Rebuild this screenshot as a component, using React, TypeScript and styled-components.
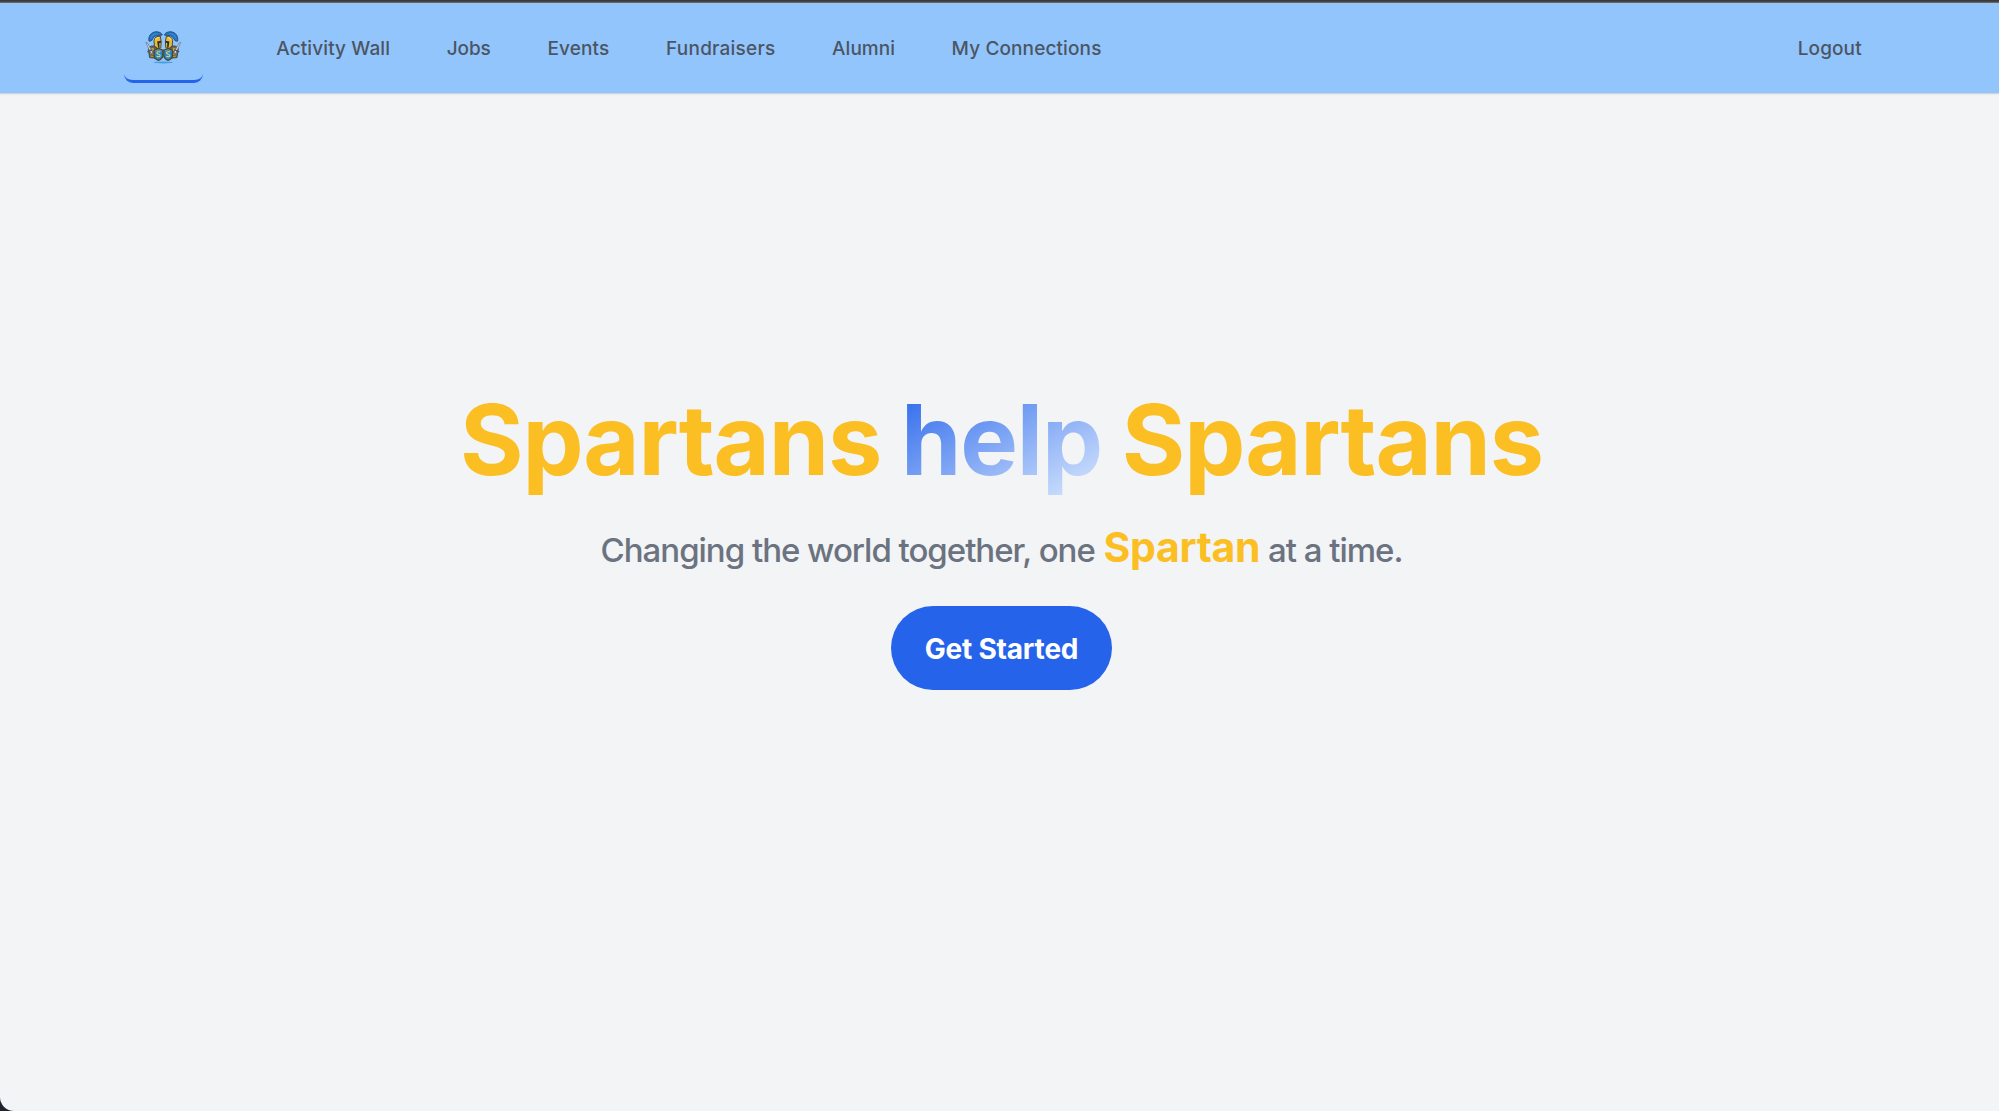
import React from "react";
import styled, { createGlobalStyle } from "styled-components";

const GlobalStyle = createGlobalStyle`
  *, *::before, *::after { box-sizing: border-box; }
  body {
    margin: 0;
    background: #1e2130;
    font-family: Inter, "Liberation Sans", sans-serif;
  }
`;

const Page = styled.div`
  height: 1111px;
  display: flex;
  flex-direction: column;
  overflow: hidden;
  background: #f3f4f6;
  border-bottom-left-radius: 14px;
`;

const WindowEdge = styled.div`
  flex: none;
  height: 3px;
  background: linear-gradient(#3b3b3b 0 1px, #474543 1px 2px, #6a6561 2px 3px);
`;

const Nav = styled.nav`
  flex: none;
  height: 91px;
  display: flex;
  align-items: center;
  padding: 0 118px 0 124px;
  background: #93c5fd;
  border-bottom: 1px solid #d1d5db;
  box-shadow: 0 1px 1px rgba(0, 0, 0, 0.04);
`;

const LogoLink = styled.a`
  width: 79px;
  height: 70px;
  margin-right: 54px;
  padding-top: 3px;
  display: flex;
  align-items: center;
  justify-content: center;
  border-bottom: 3px solid #2563eb;
  border-radius: 9px;
`;

const NavLinks = styled.div`
  flex: 1;
  display: flex;
  gap: 18px;
`;

const NavLink = styled.a<{ $tracking: number }>`
  padding: 2px 19.3px 0;
  color: #4b5563;
  font-size: 19px;
  font-weight: 500;
  line-height: 28px;
  letter-spacing: ${(p) => p.$tracking}px;
  white-space: nowrap;
`;

const Hero = styled.main`
  flex: 1;
  display: flex;
  flex-direction: column;
  align-items: center;
  padding: 287px 0 0 4px;
`;

const Title = styled.h1`
  margin: 0;
  color: #fbbf24;
  font-size: 97px;
  font-weight: 700;
  line-height: 117px;
  letter-spacing: -1.15px;
  word-spacing: -2px;
  white-space: nowrap;
`;

const GradientWord = styled.span`
  color: transparent;
  background: linear-gradient(to bottom right, #2563eb, #dbeafe);
  background-clip: text;
  -webkit-background-clip: text;
`;

const Subtitle = styled.p`
  margin: 27px 0 31px;
  height: 50px;
  color: #6b7280;
  font-size: 33px;
  font-weight: 500;
  line-height: 50px;
  letter-spacing: -1.02px;
  white-space: nowrap;
`;

const Highlight = styled.span`
  margin-left: 1px;
  color: #fbbf24;
  font-size: 41px;
  font-weight: 700;
  line-height: 1;
  letter-spacing: -0.32px;
`;

const StartButton = styled.button`
  width: 221px;
  height: 84px;
  padding: 2px 0 0;
  border: 0;
  border-radius: 42px;
  background: #2563eb;
  color: #fff;
  font-family: inherit;
  font-size: 28px;
  font-weight: 700;
  line-height: 40px;
  letter-spacing: -0.2px;
`;

const Spartan = () => (
  <g>
    <path d="M4 10.2C3 5.2 6.2 1.1 10.8.8c3-.2 5.6 1 6.5 3.2l-3.6.5C9.4 4.3 8.2 6.6 6.6 9.7z" fill="#2476c4" stroke="#245080" strokeWidth="1" />
    <path d="M5.6 7.2C6.7 4.4 8.8 2.8 12 2.7" fill="none" stroke="#3b97e0" strokeWidth=".8" />
    <path d="M9 9.5c.4-3 2.8-4.6 6.3-4.3l.9 5.3-.4 6.2-2.7 1.1L9.4 15z" fill="#e8bd34" stroke="#4b4738" strokeWidth="1" />
    <path d="M12.2 10.4l3.9-.6v1.9l-1.8.4.2 4.7h-1.4z" fill="#252b35" />
    <path d="M10.5 9c.5-1.5 1.5-2.2 3-2.4" fill="none" stroke="#ffe98c" strokeWidth=".9" />
    <path d="M3.4 18.4c0-2.3 2.6-4 6-3.2l3.2 3.2-2.1 8.8-5.9-.6z" fill="#6f6447" stroke="#37434f" strokeWidth=".9" />
    <path d="M5.2 18.1l2.8-1.4 1.7 2.1-2.9 1.9z" fill="#c9a640" />
    <path d="M5 22.2l3.6 1.2M5.4 25l3 .7" stroke="#b9993e" strokeWidth="1" />
    <path d="M.9 11.5l1.4.2 5.4 9.8-1.8 1z" fill="#dbe4ed" stroke="#5d6d80" strokeWidth=".7" />
    <path d="M2.4 20.8l5-2.2" stroke="#4b5260" strokeWidth="1.3" />
    <path d="M9.2 19.2l4.2-1.7 4.4 1.7v5.2c0 2.4-1.8 3.8-4.3 4.9-2.6-1.1-4.3-2.6-4.3-4.9z" fill="#2387d4" stroke="#4c4930" strokeWidth="1.3" />
    <path d="M10.3 20l3.2-1.2 3.2 1.2" fill="none" stroke="#c4a23d" strokeWidth=".6" />
  </g>
);

const Emblem = () => (
  <path d="M3.4.5C2 -.3 0 .1 0 1.4c0 1.6 3.3.8 3.3 2.5 0 1.4-2.1 1.7-3.5.8" fill="none" stroke="#e4d75e" strokeWidth="1.1" />
);

const Logo = () => (
  <svg width="37" height="34" viewBox="0 0 37 34" aria-hidden="true">
    <ellipse cx="18.3" cy="31.4" rx="9.5" ry="1" fill="#479fdd" />
    <Spartan />
    <g transform="translate(36.6 0) scale(-1 1)">
      <Spartan />
    </g>
    <g transform="translate(11.9 20.6)">
      <Emblem />
    </g>
    <g transform="translate(21.5 20.6)">
      <Emblem />
    </g>
  </svg>
);

const links = [
  { label: "Activity Wall", tracking: 0.1 },
  { label: "Jobs", tracking: -0.08 },
  { label: "Events", tracking: 0.16 },
  { label: "Fundraisers", tracking: 0.22 },
  { label: "Alumni", tracking: 0.02 },
  { label: "My Connections", tracking: 0.12 },
];

export default function App() {
  return (
    <>
      <GlobalStyle />
      <Page>
        <WindowEdge />
        <Nav>
          <LogoLink>
            <Logo />
          </LogoLink>
          <NavLinks>
            {links.map((l) => (
              <NavLink key={l.label} $tracking={l.tracking}>
                {l.label}
              </NavLink>
            ))}
          </NavLinks>
          <NavLink $tracking={0.1}>Logout</NavLink>
        </Nav>
        <Hero>
          <Title>
            Spartans <GradientWord>help</GradientWord> Spartans
          </Title>
          <Subtitle>
            Changing the world together, one <Highlight>Spartan</Highlight> at a time.
          </Subtitle>
          <StartButton>Get Started</StartButton>
        </Hero>
      </Page>
    </>
  );
}
